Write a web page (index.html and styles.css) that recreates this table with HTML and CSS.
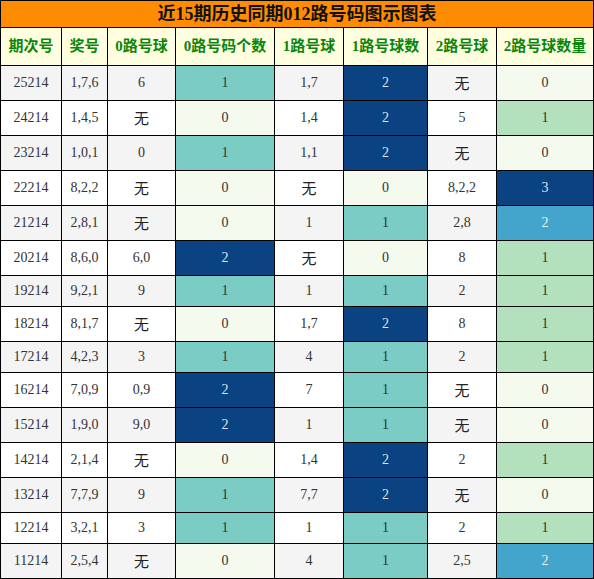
FILE: index.html
```html
<!DOCTYPE html>
<html lang="zh-CN">
<head>
  <meta charset="UTF-8">
  <meta name="viewport" content="width=device-width, initial-scale=1.0">
  <title>近15期历史同期012路号码图示图表</title>
  <link rel="stylesheet" href="styles.css">
</head>
<body>
  <table class="chart">
    <colgroup>
      <col style="width:61px">
      <col style="width:46px">
      <col style="width:68px">
      <col style="width:99px">
      <col style="width:69px">
      <col style="width:84px">
      <col style="width:69px">
      <col style="width:97px">
    </colgroup>
    <thead>
      <tr>
        <th class="title" colspan="8">近15期历史同期012路号码图示图表</th>
      </tr>
      <tr class="head">
        <th>期次号</th>
        <th>奖号</th>
        <th>0路号球</th>
        <th>0路号码个数</th>
        <th>1路号球</th>
        <th>1路号球数</th>
        <th>2路号球</th>
        <th>2路号球数量</th>
      </tr>
    </thead>
    <tbody id="chart-body">
      <!-- 数据行 -->
    </tbody>
  </table>

  <script>
    const tbody = document.getElementById('chart-body');

    // 期次, 奖号, 0路, 0路个数, 1路, 1路个数, 2路, 2路个数
    const rows = [
      ['25214', '1,7,6', '6', 1, '1,7', 2, '无', 0],
      ['24214', '1,4,5', '无', 0, '1,4', 2, '5', 1],
      ['23214', '1,0,1', '0', 1, '1,1', 2, '无', 0],
      ['22214', '8,2,2', '无', 0, '无', 0, '8,2,2', 3],
      ['21214', '2,8,1', '无', 0, '1', 1, '2,8', 2],
      ['20214', '8,6,0', '6,0', 2, '无', 0, '8', 1],
      ['19214', '9,2,1', '9', 1, '1', 1, '2', 1],
      ['18214', '8,1,7', '无', 0, '1,7', 2, '8', 1],
      ['17214', '4,2,3', '3', 1, '4', 1, '2', 1],
      ['16214', '7,0,9', '0,9', 2, '7', 1, '无', 0],
      ['15214', '1,9,0', '9,0', 2, '1', 1, '无', 0],
      ['14214', '2,1,4', '无', 0, '1,4', 2, '2', 1],
      ['13214', '7,7,9', '9', 1, '7,7', 2, '无', 0],
      ['12214', '3,2,1', '3', 1, '1', 1, '2', 1],
      ['11214', '2,5,4', '无', 0, '4', 1, '2,5', 2]
    ];

    // 颜色等级：按列最大值分级
    const scale3 = ['lv-0', 'lv-teal', 'lv-dark'];
    const scale4 = ['lv-0', 'lv-green', 'lv-blue', 'lv-dark'];

    function textCell(value) {
      const cls = value === '无' ? ' class="none"' : '';
      return `<td${cls}>${value}</td>`;
    }

    function countCell(value, scale) {
      return `<td class="${scale[value]}">${value}</td>`;
    }

    rows.forEach(r => {
      const tr = document.createElement('tr');
      tr.innerHTML =
        textCell(r[0]) + textCell(r[1]) +
        textCell(r[2]) + countCell(r[3], scale3) +
        textCell(r[4]) + countCell(r[5], scale3) +
        textCell(r[6]) + countCell(r[7], scale4);
      tbody.appendChild(tr);
    });
  </script>
</body>
</html>
```

FILE: styles.css
```css
body {
  margin: 0;
  background-color: #fff;
  font-family: "Liberation Serif", "Noto Sans CJK SC", serif;
  color: #333;
}
.chart {
  width: 594px;
  table-layout: fixed;
  border-collapse: collapse;
}
.chart th, .chart td {
  border: 1px solid #000;
  text-align: center;
  padding: 0;
}
.title {
  background-color: #ff8c00;
  color: #111;
  font-size: 18px;
  font-weight: bold;
  line-height: 26px;
}
.head th {
  background-color: #ffffe0;
  color: #0a860a;
  font-size: 15px;
  font-weight: bold;
  line-height: 21px;
  padding: 8px 0;
}
.chart td {
  font-size: 14px;
  line-height: 18px;
  padding: 6px 2px;
}
.chart tbody tr:nth-child(odd) {
  background-color: #f4f4f4;
}
.chart tbody tr:nth-child(even) {
  background-color: #fff;
}
.chart td.none {
  font-family: "Noto Sans CJK SC", sans-serif;
  font-size: 15px;
  line-height: 22px;
  color: #222;
}
.lv-0 {
  background-color: #f4faee;
}
.lv-teal {
  background-color: #7bccc4;
}
.lv-green {
  background-color: #b4e1bd;
}
.lv-blue {
  background-color: #43a5cc;
  color: #e8f0f6;
}
.lv-dark {
  background-color: #0a4282;
  color: #dde4ee;
}
```
